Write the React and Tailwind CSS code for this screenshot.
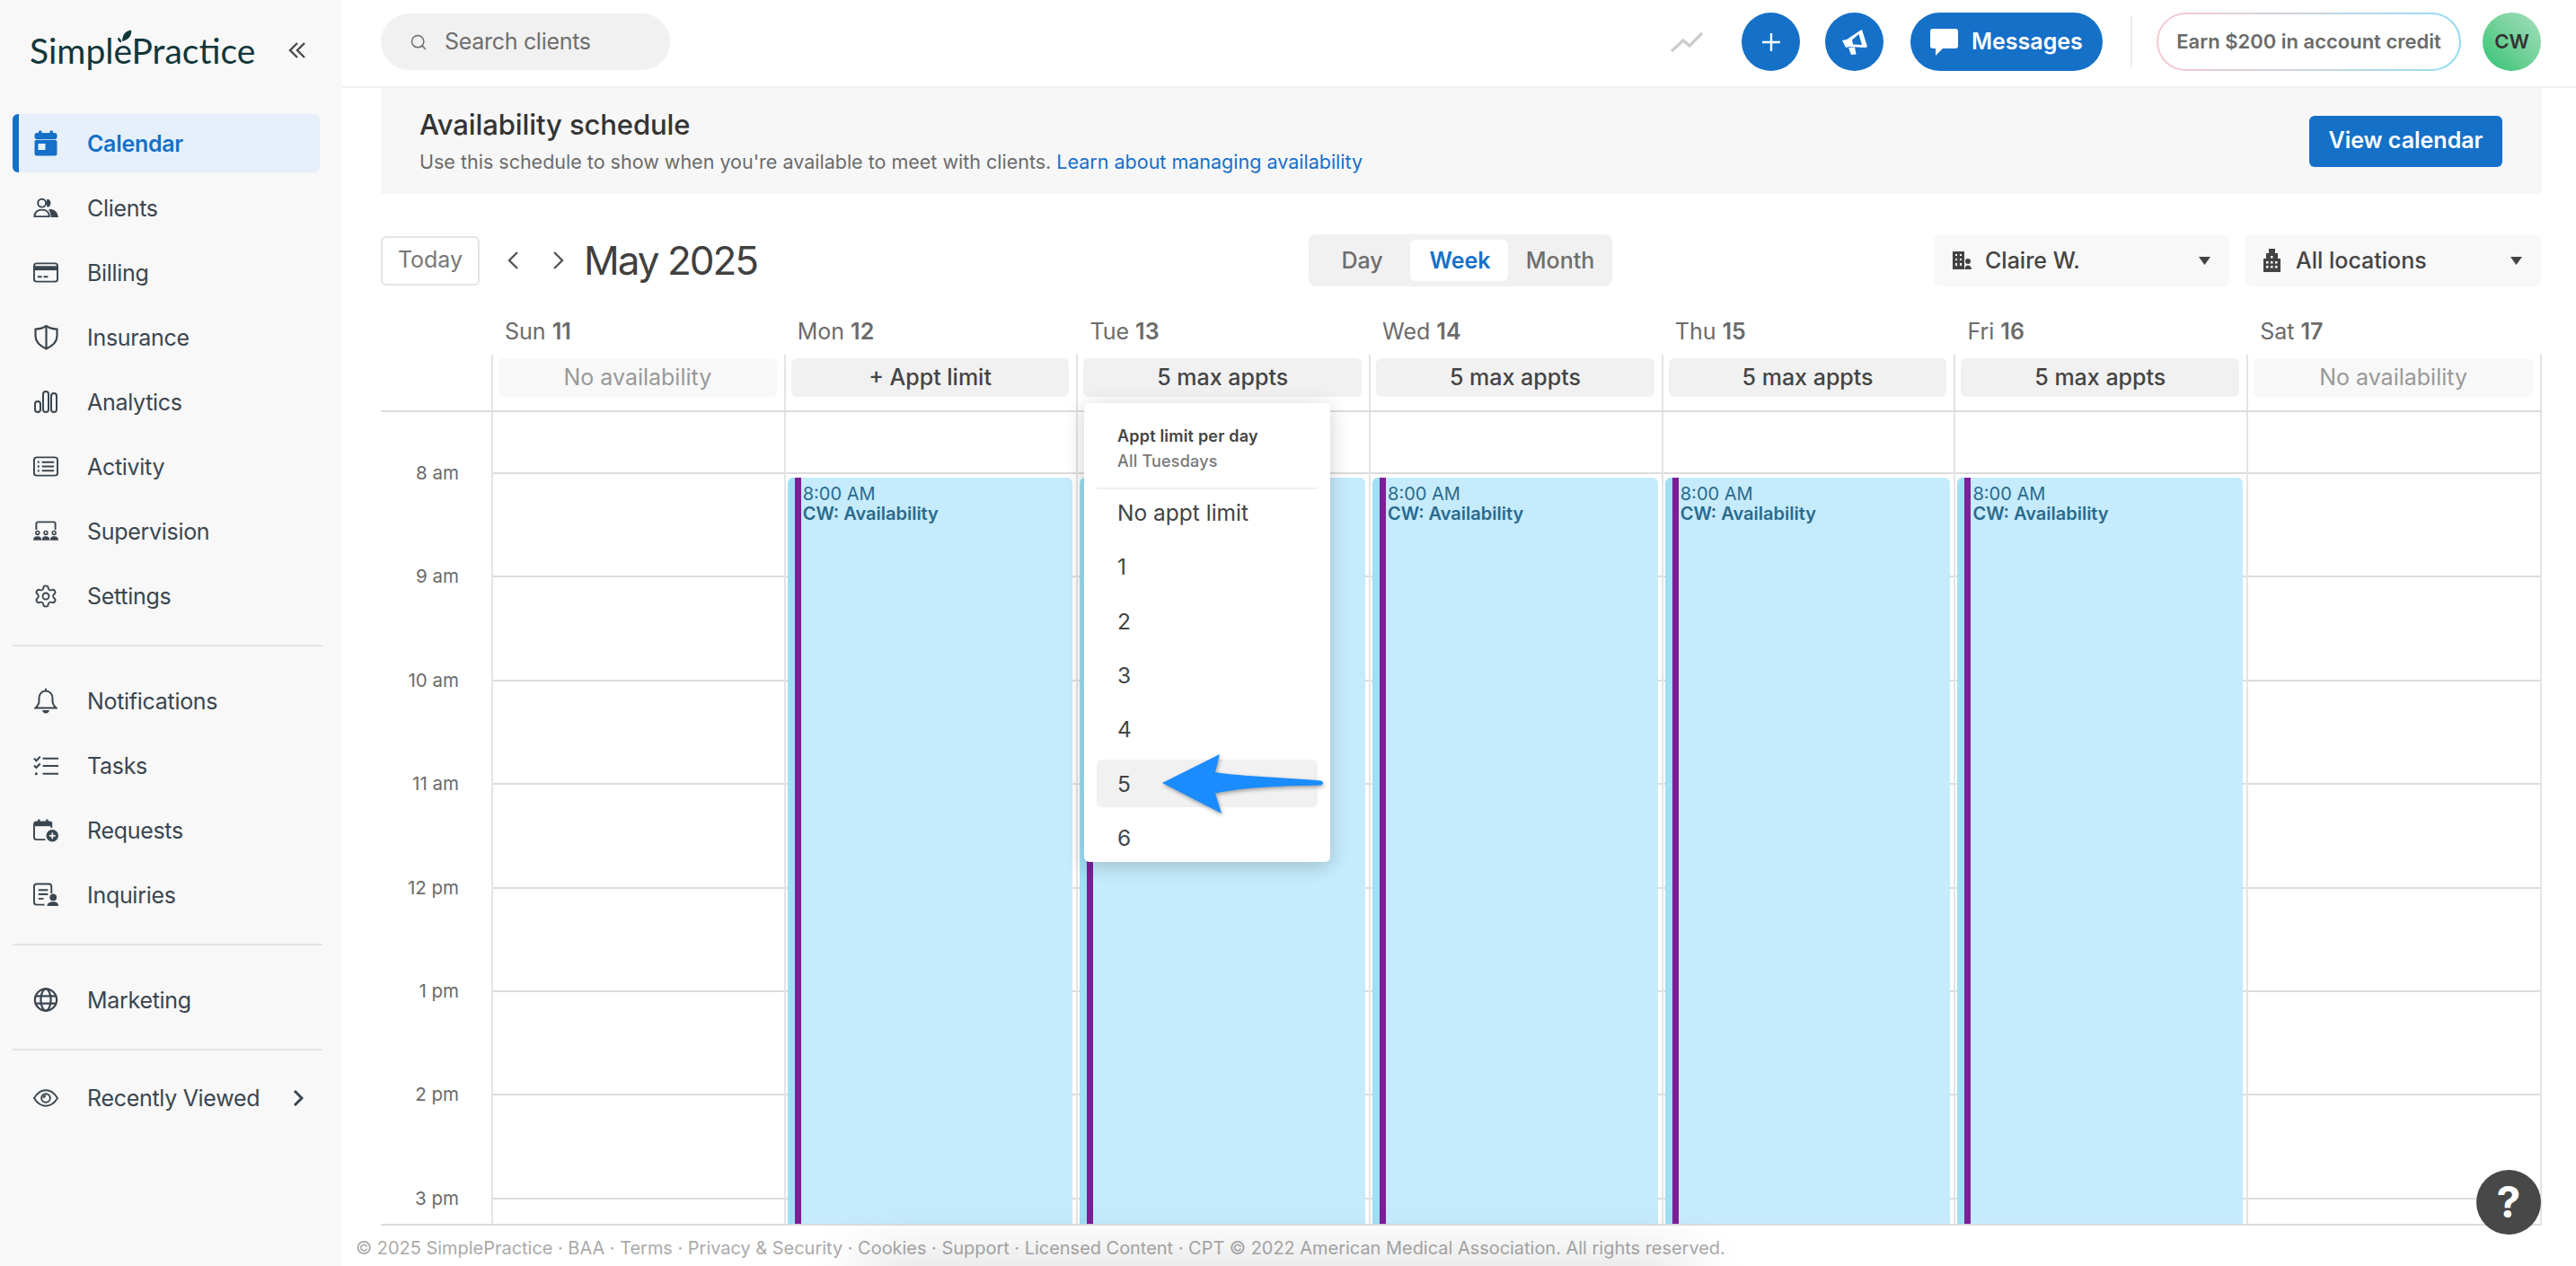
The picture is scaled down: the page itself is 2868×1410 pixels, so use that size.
import React from "react";
import { Search, Settings } from "lucide-react";

const CalendarIcon = () => (
  <svg width="26" height="29" viewBox="0 0 26 29" fill="#1570c8">
    <rect x="5" y="0.5" width="3.5" height="6" rx="1" />
    <rect x="17.5" y="0.5" width="3.5" height="6" rx="1" />
    <rect x="0.5" y="3" width="25" height="7" rx="2.5" />
    <rect x="0.5" y="10.8" width="25" height="17.7" rx="2.5" />
    <rect x="4.5" y="15" width="8" height="7" fill="#e6f0fa" />
  </svg>
);

const ClientsIcon = () => (
  <svg width="29" height="23" viewBox="0 0 29 23" fill="none" stroke="currentColor" strokeWidth="2">
    <circle cx="10" cy="6" r="4.6" />
    <path d="M1.5 21.5c0-5 3.8-7.8 8.5-7.8s8.5 2.8 8.5 7.8z" />
    <path d="M16.5 1.2a5 5 0 0 1 0 9.6c-.9-.9-1-1.8-1-4.8s.1-3.9 1-4.8z" fill="currentColor" stroke="none" />
    <path d="M20 13c5 .3 8 3.5 9 9.5h-8.6c0-3.8-.8-6.6-2.8-8.7.7-.4 1.5-.7 2.4-.8z" fill="currentColor" stroke="none" />
  </svg>
);

const BillingIcon = () => (
  <svg width="29" height="23" viewBox="0 0 29 23" fill="none" stroke="currentColor" strokeWidth="2">
    <rect x="1" y="1" width="27" height="21" rx="3" />
    <rect x="1" y="4" width="27" height="5" fill="currentColor" stroke="none" />
    <path d="M5 16.5h5M12 16.5h5" />
  </svg>
);

const ShieldIcon = () => (
  <svg width="27" height="29" viewBox="0 0 27 29" fill="none" stroke="currentColor" strokeWidth="2.2">
    <path d="M13.5 2c3.5 2.5 7.5 3.5 12 3.5V13c0 7-5.5 11.5-12 14.5C7 24.5 1.5 20 1.5 13V5.5C6 5.5 10 4.5 13.5 2z" />
    <path d="M13.5 2v25" />
  </svg>
);

const AnalyticsIcon = () => (
  <svg width="26" height="25" viewBox="0 0 26 25" fill="none" stroke="currentColor" strokeWidth="2">
    <rect x="1" y="12" width="6" height="12" rx="3" />
    <rect x="10" y="1" width="6" height="23" rx="3" />
    <rect x="19" y="3" width="6" height="21" rx="3" />
  </svg>
);

const ActivityIcon = () => (
  <svg width="29" height="23" viewBox="0 0 29 23" fill="none" stroke="currentColor" strokeWidth="2">
    <rect x="1" y="1" width="27" height="21" rx="3" />
    <path d="M10 6.5h14M10 11.5h14M10 16.5h14" />
    <path d="M5 6.5h2M5 11.5h2M5 16.5h2" strokeWidth="2.4" />
  </svg>
);

const SupervisionIcon = () => (
  <svg width="29" height="23" viewBox="0 0 29 23" fill="none" stroke="currentColor" strokeWidth="2">
    <path d="M3.5 10V3a2 2 0 0 1 2-2h18a2 2 0 0 1 2 2v7" />
    <circle cx="5" cy="13.5" r="2" strokeWidth="1.6" />
    <circle cx="14.5" cy="13.5" r="2" strokeWidth="1.6" />
    <circle cx="24" cy="13.5" r="2" strokeWidth="1.6" />
    <path d="M0 22c0-3 2-4.5 5-4.5s4.5 1.5 4.5 4.5zM10 22c0-3 1.5-4.5 4.5-4.5S19 19 19 22zM19.5 22c0-3 1.5-4.5 4.5-4.5s5 1.5 5 4.5z" fill="currentColor" stroke="none" />
  </svg>
);

const BellIcon = () => (
  <svg width="26" height="29" viewBox="0 0 26 29" fill="none" stroke="currentColor" strokeWidth="2">
    <path d="M13 3.5C8.5 3.5 5.5 7 5.5 11.5V15c0 3-2 5.5-4 7.5h23c-2-2-4-4.5-4-7.5v-3.5C20.5 7 17.5 3.5 13 3.5z" />
    <path d="M13 .8v2.7" />
    <path d="M9 25h8c-.5 2-2 3.5-4 3.5S9.5 27 9 25z" fill="currentColor" stroke="none" />
  </svg>
);

const TasksIcon = () => (
  <svg width="29" height="24" viewBox="0 0 29 24" fill="none" stroke="currentColor" strokeWidth="2.2">
    <path d="M1 3.5l2.5 2.5L8 1.5M1 11.5l2.5 2.5L8 9.5" />
    <circle cx="3.5" cy="21" r="1.6" fill="currentColor" stroke="none" />
    <path d="M11 3.5h18M11 12h18M11 21h18" />
  </svg>
);

const RequestsIcon = () => (
  <svg width="29" height="26" viewBox="0 0 29 26" fill="none" stroke="currentColor" strokeWidth="2">
    <path d="M14 23.5H4a3 3 0 0 1-3-3V6a3 3 0 0 1 3-3h15a3 3 0 0 1 2 1v6" />
    <path d="M2 3h19v5H2z" fill="currentColor" stroke="none" />
    <path d="M6.5 0v4M16 0v4" strokeWidth="2.4" />
    <circle cx="22" cy="19" r="7" fill="currentColor" stroke="none" />
    <path d="M22 15.5v7M18.5 19h7" stroke="#f8f8f8" strokeWidth="1.8" />
  </svg>
);

const InquiriesIcon = () => (
  <svg width="29" height="27" viewBox="0 0 29 27" fill="none" stroke="currentColor" strokeWidth="2">
    <path d="M13 25H4a3 3 0 0 1-3-3V4a3 3 0 0 1 3-3h14a3 3 0 0 1 3 3v8" />
    <path d="M6 8h11M6 13h11M6 18h6" />
    <circle cx="23" cy="16.5" r="4" fill="currentColor" stroke="none" />
    <path d="M16 26.5c0-3.5 3-5 7-5s6 1.5 6 5z" fill="currentColor" stroke="none" />
  </svg>
);

const GlobeIcon = () => (
  <svg width="30" height="29" viewBox="0 0 30 29" fill="none" stroke="currentColor" strokeWidth="2.4">
    <circle cx="15" cy="14.5" r="13" />
    <ellipse cx="15" cy="14.5" rx="6" ry="13" />
    <path d="M3 10h24M3 19h24" />
  </svg>
);

const EyeIcon = () => (
  <svg width="29" height="22" viewBox="0 0 29 22" fill="none" stroke="currentColor" strokeWidth="2">
    <path d="M1 11c4-6.5 8.5-9 13.5-9S24 4.5 28 11c-4 6.5-8.5 9-13.5 9S5 17.5 1 11z" />
    <circle cx="14.5" cy="11" r="5" />
    <path d="M12 11a2.5 2.5 0 0 1 2.5-2.5" />
  </svg>
);

const Caret = () => (
  <svg width="13" height="9" viewBox="0 0 13 9" fill="#444">
    <path d="M0 0h13L6.5 9z" />
  </svg>
);

const Row = ({ icon, label, active, children }) => (
  <div
    className={
      active
        ? "flex h-[65px] w-[342px] items-center gap-[32px] rounded-[6px] border-l-[7px] border-[#1570c8] bg-[#e6f0fa] pl-[16px] text-[25px] tracking-[-0.3px] font-semibold text-[#1570c8] mb-[7px]"
        : "flex h-[65px] w-[342px] items-center gap-[32px] pl-[23px] text-[25px] tracking-[-0.3px] text-[#3a4650] mb-[7px]"
    }
  >
    <span className="flex w-[28px] items-center justify-center">{icon}</span>
    <span className="pt-[2px]">{label}</span>
    {children}
  </div>
);

const Sidebar = () => (
  <aside className="w-[381px] shrink-0 bg-[#f8f8f8] pl-[14px]">
    <div className="flex h-[127px] items-start pl-[19px] pt-[33px]">
      <div className="relative font-['Lato',sans-serif] text-[39px] leading-[46px] text-[#12373a]">
        SimplePractice
        <svg className="absolute left-[98px] top-[0px]" width="16" height="15" viewBox="0 0 16 15" fill="#12373a">
          <path d="M5 13C5 6 9 1 15 .5c1 5-2 11-10 12.5z" />
          <path d="M4 14.5C1.5 14 0 12 0 9c2.5 0 4.5 2 4 5.5z" />
        </svg>
      </div>
      <svg className="ml-auto mr-[40px] mt-[13px]" width="20" height="20" viewBox="0 0 20 20" fill="none" stroke="#4a4a4a" strokeWidth="2.4">
        <path d="M10 2L2 10l8 8M18 2l-8 8 8 8" />
      </svg>
    </div>
    <Row active icon={<CalendarIcon />} label="Calendar" />
    <Row icon={<ClientsIcon />} label="Clients" />
    <Row icon={<BillingIcon />} label="Billing" />
    <Row icon={<ShieldIcon />} label="Insurance" />
    <Row icon={<AnalyticsIcon />} label="Analytics" />
    <Row icon={<ActivityIcon />} label="Activity" />
    <Row icon={<SupervisionIcon />} label="Supervision" />
    <Row icon={<Settings size={36} strokeWidth={1.6} />} label="Settings" />
    <div className="mb-[28px] mt-[22px] h-[2px] w-[345px] bg-[#e4e4e4]" />
    <Row icon={<BellIcon />} label="Notifications" />
    <Row icon={<TasksIcon />} label="Tasks" />
    <Row icon={<RequestsIcon />} label="Requests" />
    <Row icon={<InquiriesIcon />} label="Inquiries" />
    <div className="mb-[28px] mt-[22px] h-[2px] w-[345px] bg-[#e4e4e4]" />
    <Row icon={<GlobeIcon />} label="Marketing" />
    <div className="mb-[20px] mt-[22px] h-[2px] w-[345px] bg-[#e4e4e4]" />
    <Row icon={<EyeIcon />} label="Recently Viewed">
      <svg className="absolute left-[326px]" width="12" height="20" viewBox="0 0 12 20" fill="none" stroke="#3a4650" strokeWidth="3">
        <path d="M2 2l8 8-8 8" />
      </svg>
    </Row>
  </aside>
);

const TopBar = () => (
  <header className="flex h-[98px] items-center border-b-2 border-[#f0f0f0] pb-[3px] pl-[43px] pr-[39px]">
    <div className="flex h-[63px] w-[322px] items-center gap-[19px] rounded-full bg-[#f1f1f1] pl-[32px] text-[25px] tracking-[-0.3px] text-[#6e6e6e]">
      <Search size={20} strokeWidth={1.8} />
      Search clients
    </div>
    <div className="ml-auto flex items-center">
      <svg width="36" height="24" viewBox="0 0 36 24" fill="none" stroke="#cccccc" strokeWidth="3.2">
        <path d="M1 22L14 10l7 6L35 2" />
      </svg>
      <div className="ml-[43px] flex h-[65px] w-[65px] items-center justify-center rounded-full bg-[#1570c8]">
        <svg width="20" height="20" viewBox="0 0 20 20" stroke="#fff" strokeWidth="2.4">
          <path d="M10 0v20M0 10h20" />
        </svg>
      </div>
      <div className="ml-[28px] flex h-[65px] w-[65px] items-center justify-center rounded-full bg-[#1570c8]">
        <svg width="28" height="30" viewBox="0 0 28 30" fill="#fff" fillRule="evenodd">
          <path d="M0 13l5-1L20 2l2-1 6 19-2 1-18-1-4 1zM18.5 6L11 12.5l1 5 10 .5z" />
          <path d="M7 21l7-.5 1.5 8L10 29z" />
        </svg>
      </div>
      <div className="ml-[30px] flex h-[65px] w-[214px] items-center gap-[15px] rounded-full bg-[#1570c8] pl-[22px] text-[25px] font-semibold text-white">
        <svg width="31" height="30" viewBox="0 0 31 30" fill="#fff">
          <rect width="31" height="22" rx="3" />
          <path d="M6 21v9l9-9z" />
        </svg>
        Messages
      </div>
      <div className="ml-[31px] h-[57px] w-[2px] bg-[#ececec]" />
      <div className="ml-[27px] rounded-full bg-linear-to-r from-[#f8c9d0] to-[#8fdcf2] p-[2px]">
        <div className="flex h-[61px] w-[335px] items-center justify-center rounded-full bg-white text-[22px] font-semibold text-[#6b6b6b]">
          Earn $200 in account credit
        </div>
      </div>
      <div className="ml-[24px] flex h-[65px] w-[65px] items-center justify-center rounded-full bg-linear-to-tr from-[#22c272] to-[#a3dfbd] text-[22px] font-semibold text-[#333]">
        CW
      </div>
    </div>
  </header>
);

const Banner = () => (
  <div className="flex h-[118px] items-center justify-between bg-[#f7f7f7] pl-[43px] pr-[44px]">
    <div>
      <div className="text-[31px] font-medium leading-[40px] tracking-[-0.1px] text-[#333]">Availability schedule</div>
      <div className="mt-[6px] text-[21.5px] leading-[30px] text-[#6b6b6b]">
        Use this schedule to show when you're available to meet with clients.{" "}
        <span className="text-[#1570c8]">Learn about managing availability</span>
      </div>
    </div>
    <div className="flex h-[57px] w-[215px] items-center justify-center rounded-[6px] bg-[#1570c8] text-[25px] font-semibold text-white">
      View calendar
    </div>
  </div>
);

const BuildingPerson = () => (
  <svg width="21" height="20" viewBox="0 0 21 20" fill="#444">
    <path d="M0 0h13v20H0z" />
    <path d="M3 3h2v2H3zM8 3h2v2H8zM3 8h2v2H3zM8 8h2v2H8zM3 13h2v3H3zM8 13h2v3H8z" fill="#f8f8f8" />
    <circle cx="17" cy="11" r="3" />
    <path d="M13.5 20c0-3 1.5-4.5 3.5-4.5s4 1.5 4 4.5z" />
  </svg>
);

const Building = () => (
  <svg width="19" height="26" viewBox="0 0 19 26" fill="#444">
    <path d="M6 0h7v5h3v6h3v15H0V11h3V5h3z" />
    <path d="M3 14h2.5v2.5H3zM8 14h2.5v2.5H8zM13 14h2.5v2.5H13zM3 19h2.5v2.5H3zM8 19h2.5v2.5H8zM13 19h2.5v2.5H13zM8 8h2.5v2.5H8z" fill="#f8f8f8" />
  </svg>
);

const SelectBox = ({ icon, label, width }) => (
  <div className={`flex h-[58px] ${width} items-center rounded-[8px] bg-[#f8f8f8] pl-[21px] pr-[22px] text-[25px] font-medium text-[#444]`}>
    <span className="flex w-[36px] items-center">{icon}</span>
    <span className="pt-[1px]">{label}</span>
    <span className="ml-auto">
      <Caret />
    </span>
  </div>
);

const Toolbar = () => (
  <div className="mt-[45px] flex h-[58px] items-center">
    <div className="flex w-[1033px] items-center">
      <div className="flex h-[55px] w-[110px] items-center justify-center rounded-[6px] border-2 border-[#e4e4e4] text-[25px] text-[#777]">
        Today
      </div>
      <svg className="ml-[31px]" width="13" height="22" viewBox="0 0 13 22" fill="none" stroke="#555" strokeWidth="2.4">
        <path d="M11 2l-9 9 9 9" />
      </svg>
      <svg className="ml-[37px]" width="13" height="22" viewBox="0 0 13 22" fill="none" stroke="#555" strokeWidth="2.4">
        <path d="M2 2l9 9-9 9" />
      </svg>
      <div className="ml-[22px] text-[44px] font-normal leading-[54px] tracking-[-2px] text-[#404040]">May 2025</div>
    </div>
    <div className="flex h-[58px] w-[338px] items-center rounded-[8px] bg-[#f1f1f1] p-[6px] text-[25px] font-medium text-[#6e6e6e]">
      <div className="flex h-[46px] w-[107px] items-center justify-center pt-[2px]">Day</div>
      <div className="flex h-[46px] w-[109px] items-center justify-center rounded-[6px] bg-white pl-[2px] pt-[2px] font-semibold text-[#1570c8]">Week</div>
      <div className="flex h-[46px] w-[110px] items-center justify-center pl-[6px] pt-[2px]">Month</div>
    </div>
    <div className="ml-auto flex gap-[16px]">
      <SelectBox icon={<BuildingPerson />} label="Claire W." width="w-[330px]" />
      <SelectBox icon={<Building />} label="All locations" width="w-[331px]" />
    </div>
  </div>
);

const days = [
  { name: "Sun", num: "11", limit: "No availability", off: true },
  { name: "Mon", num: "12", limit: "+ Appt limit" },
  { name: "Tue", num: "13", limit: "5 max appts" },
  { name: "Wed", num: "14", limit: "5 max appts" },
  { name: "Thu", num: "15", limit: "5 max appts" },
  { name: "Fri", num: "16", limit: "5 max appts" },
  { name: "Sat", num: "17", limit: "No availability", off: true },
];

const hours = ["8 am", "9 am", "10 am", "11 am", "12 pm", "1 pm", "2 pm", "3 pm"];

const options = ["No appt limit", "1", "2", "3", "4", "5", "6"];

const LimitMenu = () => (
  <div className="absolute left-[783px] top-[130px] z-20 h-[511px] w-[274px] rounded-[6px] bg-white px-[14px] pt-[23px] shadow-[0_4px_22px_rgba(0,0,0,0.2)]">
    <div className="px-[23px] pb-[15px] text-[18px] leading-[28px]">
      <div className="font-semibold tracking-[0.2px] text-[#444]">Appt limit per day</div>
      <div className="font-medium tracking-[0.2px] text-[#777]">All Tuesdays</div>
    </div>
    <div className="h-[2px] bg-[#f0f0f0]" />
    {options.map((o) => (
      <div
        key={o}
        className={`flex h-[53px] items-center rounded-[6px] px-[23px] text-[24.5px] text-[#444] mb-[7.3px] ${o === "5" ? "bg-[#f1f1f1]" : ""}`}
      >
        {o}
      </div>
    ))}
    <svg
      className="absolute left-[87px] top-[391px] drop-shadow-[1px_2px_2px_rgba(0,0,0,0.35)]"
      width="180"
      height="66"
      viewBox="0 0 180 66"
      fill="#1a8cff"
    >
      <path d="M0 32L64 0l-5 20c30 5 80 6 117 9.5 4 .5 4 4.5 0 5-40 1-85 2-117 9l7 22.5z" />
    </svg>
  </div>
);

const CalendarGrid = () => (
  <div className="relative">
    <div className="grid grid-cols-[123px_repeat(6,325.7px)_1fr]">
      <div className="h-[76px]" />
      {days.map((d) => (
        <div key={d.name} className="flex h-[76px] items-end pb-[10px] pl-[15px] text-[25px] leading-[32px] text-[#6b6b6b]">
          <span>
            {d.name} <span className="font-semibold">{d.num}</span>
          </span>
        </div>
      ))}
    </div>
    <div className="grid grid-cols-[123px_repeat(6,325.7px)_1fr] border-b-2 border-[#dcdcdc]">
      <div className="h-[62px]" />
      {days.map((d) => (
        <div
          key={d.name}
          className={`h-[62px] border-l-2 border-[#e4e4e4] pl-[6px] pr-[8px] pt-[4px] ${d.name === "Sat" ? "border-r-2" : ""}`}
        >
          <div
            className={
              d.off
                ? "flex h-[43px] items-center justify-center rounded-[6px] bg-[#f8f8f8] text-[25px] text-[#999]"
                : "flex h-[43px] items-center justify-center rounded-[6px] bg-[#f1f1f1] text-[25px] font-medium text-[#444]"
            }
          >
            {d.limit}
          </div>
        </div>
      ))}
    </div>
    <div className="box-content grid h-[904px] grid-cols-[123px_repeat(6,325.7px)_1fr] overflow-hidden border-b-2 border-[#dcdcdc]">
      <div>
        <div className="h-[67px]" />
        {hours.map((h) => (
          <div key={h} className="h-[115.4px] pr-[36px] pt-[1px] text-right text-[20.5px] leading-[28px] text-[#6b6b6b]">
            <div className="-translate-y-1/2">{h}</div>
          </div>
        ))}
      </div>
      {days.map((d) => (
        <div key={d.name} className={`relative border-l-2 border-[#e4e4e4] ${d.name === "Sat" ? "border-r-2" : ""}`}>
          <div className="h-[67px]" />
          {hours.map((h) => (
            <div key={h} className="h-[115.4px] border-t-2 border-[#dcdcdc]" />
          ))}
          {!d.off && (
            <div className="absolute bottom-0 left-[2px] right-[4px] top-[73px] overflow-hidden rounded-t-[6px] border-l-[8px] border-[#9fe0f5] bg-[#c5ebfc]">
              <div className="h-full border-l-[7px] border-[#7b1f95] pl-[2px] pt-[7px] text-[20px] leading-[22px] text-[#2a6a8c]">
                <div>8:00 AM</div>
                <div className="font-semibold">CW: Availability</div>
              </div>
            </div>
          )}
        </div>
      ))}
    </div>
    <LimitMenu />
  </div>
);

export default function App() {
  return (
    <div className="relative flex h-[1410px] w-[2868px] overflow-hidden bg-white font-['Inter',sans-serif]">
      <Sidebar />
      <main className="flex min-w-0 flex-1 flex-col">
        <TopBar />
        <div className="pl-[43px] pr-[38px]">
          <Banner />
          <Toolbar />
          <CalendarGrid />
        </div>
        <footer className="flex flex-1 items-center pl-[15px] pt-[7px] text-[19.95px] text-[#aaaaaa]">
          © 2025 SimplePractice · BAA · Terms · Privacy &amp; Security · Cookies · Support · Licensed Content · CPT © 2022 American Medical Association. All rights reserved.
        </footer>
      </main>
      <div className="absolute left-[960px] top-[1410px] h-[40px] w-[920px] shadow-[0_0_70px_rgba(0,0,0,0.2)]" />
      <div className="absolute left-[2757px] top-[1303px] z-30 flex h-[72px] w-[72px] items-center justify-center rounded-full bg-[#484848] text-[48px] font-bold text-white">
        ?
      </div>
    </div>
  );
}
